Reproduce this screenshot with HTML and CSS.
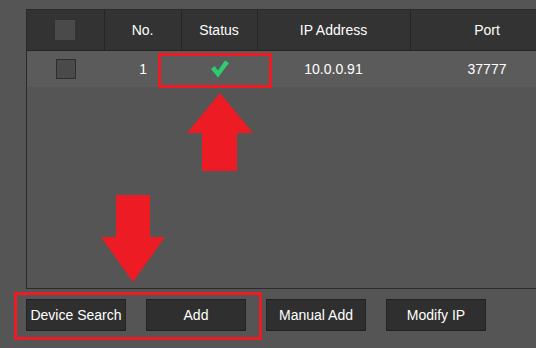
FILE: index.html
```html
<!DOCTYPE html>
<html lang="en">
  <head>
    <meta charset="UTF-8">
    <meta name="viewport" content="width=device-width, initial-scale=1.0">
    <title>Device Manager</title>
    <link rel="stylesheet" href="styles.css">
  </head>
<body>
  <div class="pagina">
    <div class="panel-lista">
      <table class="tabla-dispositivos">
        <colgroup>
          <col class="col-check">
          <col class="col-no">
          <col class="col-estado">
          <col class="col-ip">
          <col class="col-puerto">
        </colgroup>
        <thead>
          <tr>
            <th><span class="casilla casilla-cabecera"></span></th>
            <th class="num">No.</th>
            <th>Status</th>
            <th>IP Address</th>
            <th>Port</th>
          </tr>
        </thead>
        <tbody>
          <tr>
            <td><span class="casilla"></span></td>
            <td class="num">1</td>
            <td>
              <svg class="icono-ok" width="18" height="18" viewBox="0 0 18 18">
                <path d="M0 9 L3.5 6 L7 10.5 L14 0.5 L18 3 L7 17.5 Z" fill="#2ecc71"/>
              </svg>
            </td>
            <td>10.0.0.91</td>
            <td>37777</td>
          </tr>
        </tbody>
      </table>
    </div>

    <div class="controles">
      <button>Device Search</button>
      <button>Add</button>
      <button>Manual Add</button>
      <button>Modify IP</button>
    </div>

    <!-- marcas rojas del tutorial -->
    <div class="marca marca-estado"></div>
    <div class="marca marca-botones"></div>

    <svg class="flecha flecha-arriba" width="66" height="79" viewBox="0 0 66 79">
      <polygon points="33,0 66,40 50,40 50,78 15,78 15,40 0,40" fill="#ed1c24"/>
    </svg>
    <svg class="flecha flecha-abajo" width="65" height="88" viewBox="0 0 65 88">
      <polygon points="15,0 49,0 49,42 64,42 32,87 0,42 15,42" fill="#ed1c24"/>
    </svg>
  </div>
</body>
</html>
```

FILE: styles.css
```css
  body {
    margin: 0;
    background-color: #555555;
    font-family: 'Liberation Sans', Arial, sans-serif;
    color: #ffffff;
    overflow: hidden;
  }

  .pagina {
    position: relative;
    width: 536px;
    height: 348px;
    overflow: hidden;
  }

  .panel-lista {
    margin: 9px 0 0 26px;
    height: 278px;
    border: 1px solid #2a2a2a;
    border-right: none;
    overflow: hidden;
  }

  .tabla-dispositivos {
    border-collapse: collapse;
    table-layout: fixed;
    width: 537px;
    font-size: 14px;
  }

  .col-check { width: 77px; }
  .col-no { width: 77px; }
  .col-estado { width: 76px; }
  .col-ip { width: 153px; }
  .col-puerto { width: 154px; }

  .tabla-dispositivos th {
    height: 40px;
    padding: 0;
    background-color: #333333;
    border-right: 1px solid #262626;
    border-bottom: 1px solid #222222;
    font-weight: normal;
    text-align: center;
  }

  .tabla-dispositivos td {
    height: 36px;
    padding: 0;
    background-color: #5b5b5b;
    text-align: center;
  }

  .tabla-dispositivos th.num {
    text-align: right;
    padding-right: 27px;
  }

  .tabla-dispositivos td.num {
    text-align: right;
    padding-right: 34px;
  }

  .casilla {
    display: inline-block;
    width: 18px;
    height: 18px;
    background-color: #4a4a4a;
    border: 1px solid #2e2e2e;
    vertical-align: middle;
  }

  .casilla-cabecera {
    border-color: #4a4a4a;
  }

  .icono-ok {
    display: inline-block;
    vertical-align: middle;
    margin-left: 2px;
  }

  .controles {
    display: flex;
    gap: 20px;
    margin: 10px 0 0 26px;
  }

  button {
    width: 100px;
    height: 32px;
    padding: 0;
    background-color: #2f2f2f;
    border: 1px solid #232323;
    color: #ffffff;
    font-family: 'Liberation Sans', Arial, sans-serif;
    font-size: 14px;
  }

  .marca {
    position: absolute;
    border: 3px solid #ed1c24;
    box-sizing: border-box;
  }

  .marca-estado {
    left: 158px;
    top: 53px;
    width: 114px;
    height: 35px;
  }

  .marca-botones {
    left: 14px;
    top: 292px;
    width: 248px;
    height: 48px;
  }

  .flecha {
    position: absolute;
  }

  .flecha-arriba {
    left: 187px;
    top: 93px;
  }

  .flecha-abajo {
    left: 101px;
    top: 195px;
  }
```
